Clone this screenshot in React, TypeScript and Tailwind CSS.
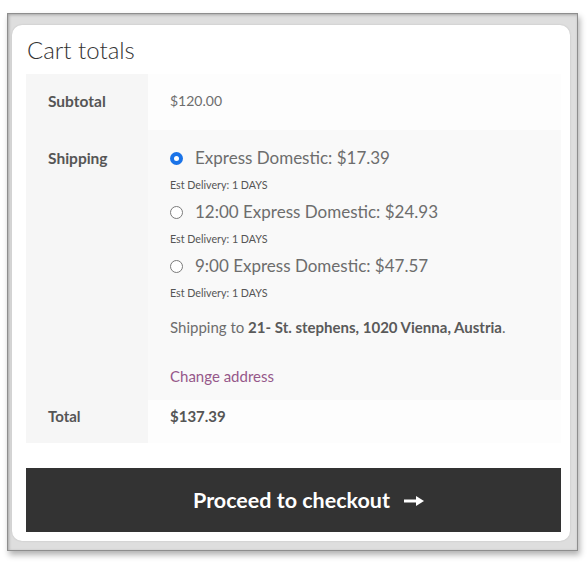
import { useState } from "react";

type Rate = {
  id: string;
  label: string;
  eta: string;
};

const rates: Rate[] = [
  { id: "express", label: "Express Domestic: $17.39", eta: "Est Delivery: 1 DAYS" },
  { id: "express-12", label: "12:00 Express Domestic: $24.93", eta: "Est Delivery: 1 DAYS" },
  { id: "express-9", label: "9:00 Express Domestic: $47.57", eta: "Est Delivery: 1 DAYS" },
];

function Radio({ checked }: { checked: boolean }) {
  return checked ? (
    <span className="flex h-[13px] w-[13px] shrink-0 items-center justify-center rounded-full bg-[#1a73e8]">
      <span className="h-[5px] w-[5px] rounded-full bg-white" />
    </span>
  ) : (
    <span className="h-[13px] w-[13px] shrink-0 rounded-full border border-[#7a7a7a] bg-white" />
  );
}

export default function App() {
  const [selected, setSelected] = useState("express");

  return (
    <div
      className="h-[569px] w-[587px] bg-white pl-[7px] pt-[13px]"
      style={{ fontFamily: "Lato, 'Open Sans', sans-serif" }}
    >
      <div className="h-[538px] w-[571px] border border-[#8e8e8e] bg-[#dedede] pb-[9px] pl-[4px] pr-[7px] pt-[11px] shadow-[2px_4px_6px_rgba(0,0,0,0.3),inset_1px_1px_3px_rgba(0,0,0,0.25)]">
        <div className="flex h-full flex-col rounded-[10px] bg-white pb-[9px] pl-[14px] pr-[9px] shadow-[0_0_2px_rgba(0,0,0,0.15)]">
          <h2 className="flex h-[49px] items-center pl-[1px] text-[24px] font-light text-[#333]">
            Cart totals
          </h2>

          <div className="grid grid-cols-[122px_1fr] text-[15px] text-[#6d6d6d]">
            {/* Subtotal */}
            <div className="h-[56px] bg-[#f6f6f6] pl-[22px] pt-[14px] text-[15.5px] font-bold leading-[26px] text-[#555]">
              Subtotal
            </div>
            <div className="h-[56px] bg-[#fdfdfd] pl-[22px] pt-[14px] text-[14px] leading-[26px]">
              $120.00
            </div>

            {/* Shipping */}
            <div className="bg-[#f6f6f6] pl-[22px] pt-[15px] text-[15.5px] font-bold leading-[26px] text-[#555]">
              Shipping
            </div>
            <div className="bg-[#f9f9f9] pb-[11px] pl-[22px] pt-[15px]">
              {rates.map((rate) => (
                <div key={rate.id}>
                  <label
                    className="flex h-[26px] cursor-pointer items-center gap-[12px] text-[17px]"
                    onClick={() => setSelected(rate.id)}
                  >
                    <Radio checked={selected === rate.id} />
                    <span>{rate.label}</span>
                  </label>
                  <div className="flex h-[28px] items-center text-[10.7px] text-[#555]">
                    {rate.eta}
                  </div>
                </div>
              ))}
              <p className="mt-[7px] leading-[26px]">
                Shipping to{" "}
                <strong className="font-bold text-[#5a5a5a]">
                  21- St. stephens, 1020 Vienna, Austria
                </strong>
                .
              </p>
              <a href="#" className="mt-[23px] block leading-[26px] text-[#96588a]">
                Change address
              </a>
            </div>

            {/* Total */}
            <div className="h-[43px] bg-[#f6f6f6] pl-[22px] pt-[3px] font-bold leading-[26px] text-[#555]">
              Total
            </div>
            <div className="h-[43px] bg-[#fdfdfd] pl-[22px] pt-[3px] font-bold leading-[26px] text-[#555]">
              $137.39
            </div>
          </div>

          <button className="mt-[25px] flex h-[64px] w-full items-center justify-center gap-[14px] bg-[#333] pl-[30px] text-[21.5px] font-bold text-white">
            <span>Proceed to checkout</span>
            <svg width="20" height="12" viewBox="0 0 20 12" className="mt-[1px]">
              <path d="M0 6h13" stroke="white" strokeWidth="3" />
              <path d="M12 1l8 5-8 5z" fill="white" />
            </svg>
          </button>
        </div>
      </div>
    </div>
  );
}
